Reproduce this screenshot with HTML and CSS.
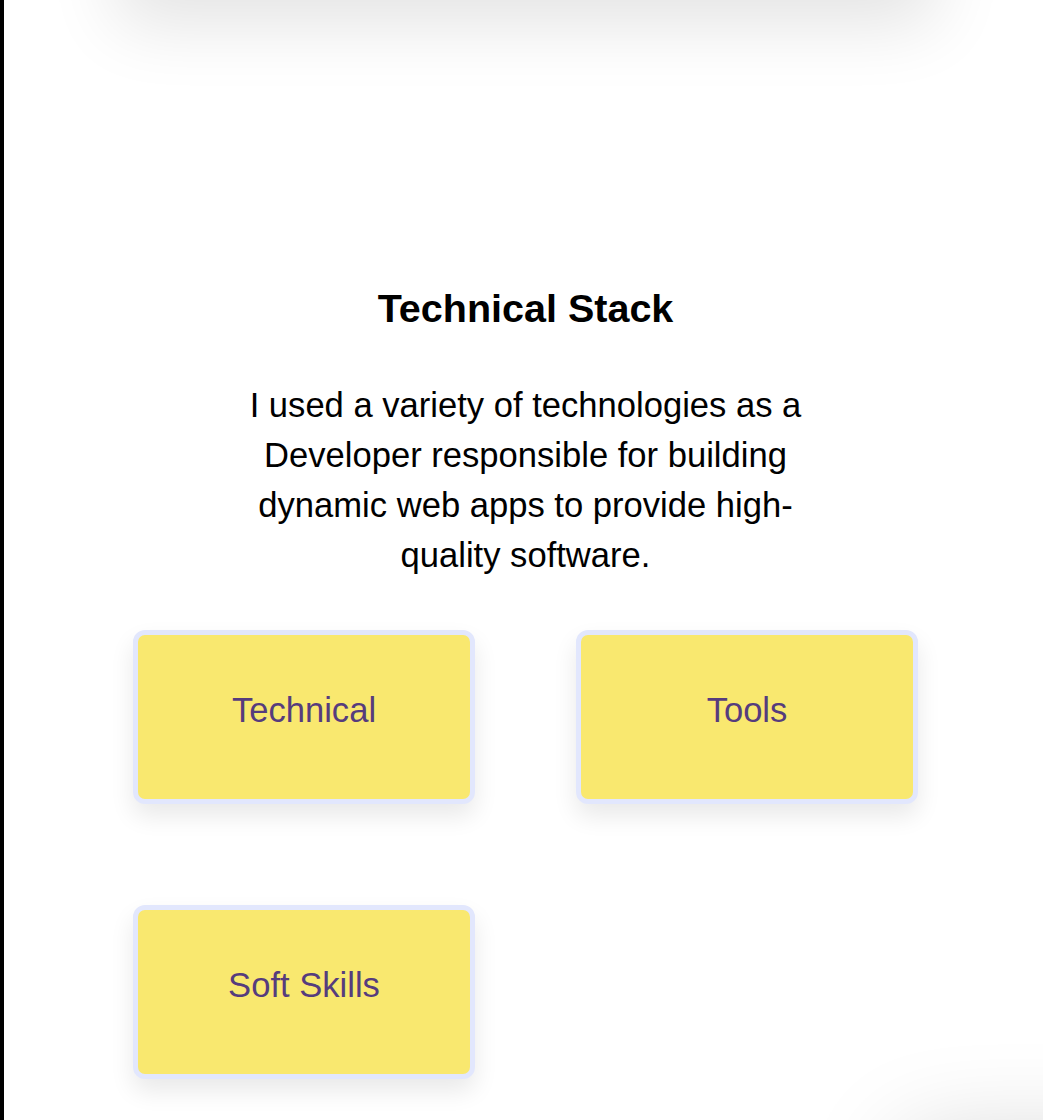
FILE: index.html
```html
<!DOCTYPE html>
<html lang="en">
<head>
<meta charset="utf-8">
<title>Technical Stack</title>
<link rel="stylesheet" href="styles.css">
</head>
<body>
<div class="page">
  <div class="prev-card"></div>
  <section class="stack">
    <h2 class="stack-title">Technical Stack</h2>
    <p class="stack-text">I used a variety of technologies as a Developer responsible for building dynamic web apps to provide high-quality software.</p>
    <div class="stack-grid">
      <div class="stack-card">Technical</div>
      <div class="stack-card">Tools</div>
      <div class="stack-card">Soft Skills</div>
    </div>
  </section>
  <div class="next-row">
    <div class="next-card"></div>
  </div>
</div>
</body>
</html>
```

FILE: styles.css
```css
html, body {
  margin: 0;
  padding: 0;
  background: #ffffff;
}

body {
  font-family: "Liberation Sans", Arial, Helvetica, sans-serif;
  color: #000000;
  overflow: hidden;
}

.page {
  border-left: 4px solid #000000;
  padding-left: 4px;
  min-height: 1120px;
  overflow: hidden;
}

.prev-card {
  width: 820px;
  height: 200px;
  margin: -200px auto 0;
  background: #ffffff;
  border-radius: 16px;
  box-shadow: 0 25px 70px rgba(0, 0, 0, 0.11);
}

.stack {
  padding-top: 285px;
  display: flex;
  flex-direction: column;
  align-items: center;
}

.stack-title {
  margin: 0;
  font-size: 39.5px;
  line-height: 46.8px;
  font-weight: 700;
  text-align: center;
}

.stack-text {
  margin: 48px 0 0;
  max-width: 600px;
  font-size: 34.6px;
  line-height: 50px;
  text-align: center;
}

.stack-grid {
  margin-top: 50px;
  display: grid;
  grid-template-columns: 342px 342px;
  column-gap: 101px;
  row-gap: 101px;
  justify-content: center;
}

.stack-card {
  box-sizing: border-box;
  height: 174px;
  padding-top: 55px;
  border: 5px solid #e2e7fd;
  border-radius: 12px;
  background: #f9e86f;
  color: #563c7d;
  font-size: 34.6px;
  line-height: 40px;
  text-align: center;
  box-shadow: 0 12px 24px rgba(0, 0, 0, 0.09);
}

.next-row {
  margin-top: 52px;
  display: flex;
  justify-content: flex-end;
}

.next-card {
  width: 300px;
  height: 300px;
  margin-right: -160px;
  background: #ffffff;
  border-radius: 16px;
  box-shadow: 0 10px 100px rgba(0, 0, 0, 0.18);
}
```
